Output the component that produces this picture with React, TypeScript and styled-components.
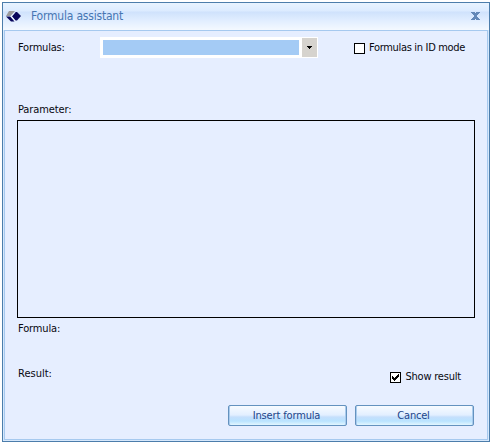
import React from "react";
import styled, { createGlobalStyle } from "styled-components";

const GlobalStyle = createGlobalStyle`
  * { box-sizing: border-box; }
  body {
    margin: 0;
    background: #fff;
    color: #080810;
    font: 11px/14px "DejaVu Sans Condensed", "DejaVu Sans", sans-serif;
    font-stretch: condensed;
  }
  button { font: inherit; font-stretch: inherit; }
`;

const Page = styled.div`
  height: 444px;
  padding: 2px;
  overflow: hidden;
`;

const Dialog = styled.section`
  display: flex;
  flex-direction: column;
  width: 488px;
  height: 440px;
  padding: 0 1px 1px;
  border: 1px solid #4c7dab;
  background: #d6e8fc;
`;

const TitleBar = styled.header`
  display: flex;
  align-items: center;
  flex: none;
  height: 27px;
  margin: 0 -1px;
  padding: 0 9px 1px 3px;
  background: linear-gradient(#e8f3ff 0, #dcebff 8px, #cfe2fc 9px, #e0edff 17px, #f4f9ff 27px);
`;

const Title = styled.h1`
  flex: 1;
  margin: 0 0 0 10px;
  color: #4676b3;
  font-size: 12px;
  font-weight: normal;
  line-height: 16px;
  letter-spacing: -0.2px;
`;

const CloseButton = styled.button`
  display: flex;
  width: 9px;
  height: 8px;
  padding: 0;
  border: 0;
  background: none;
`;

const Content = styled.main`
  flex: 1;
  display: flex;
  flex-direction: column;
  padding: 6px 12px 12px;
  border: 1px solid #a6c9ef;
  background: #e6eeff;
`;

const FormulaRow = styled.div`
  display: flex;
  align-items: center;
  height: 22px;
`;

const Label = styled.span<{ $spacing?: number }>`
  padding-left: 1px;
  white-space: nowrap;
  letter-spacing: ${({ $spacing = 0 }) => $spacing}px;
`;

const FormulaLabel = styled(Label)`
  width: 83px;
`;

const ComboBox = styled.div`
  display: flex;
  align-self: flex-start;
  width: 218px;
  height: 21px;
  padding: 1px;
  background: #fff;
`;

const Selection = styled.div`
  width: 196px;
  height: 15px;
  margin: 2px 3px 2px 2px;
  background: #a4cbf5;
`;

const DropButton = styled.button`
  display: flex;
  align-items: center;
  justify-content: center;
  width: 15px;
  height: 19px;
  padding: 0;
  border: 0;
  background: #d6d3ce;
`;

const CheckField = styled.label<{ $gap: number }>`
  display: flex;
  align-items: center;
  gap: 3px;
  margin-left: ${({ $gap }) => $gap}px;
`;

const Box = styled.span`
  display: flex;
  width: 11px;
  height: 11px;
  border: 1px solid #000;
  background: #fff;
`;

const ParameterLabel = styled.div`
  height: 16px;
  margin-top: 44px;
`;

const ParameterArea = styled.div`
  height: 198px;
  margin-top: 1px;
  border: 1px solid #000;
`;

const ResultLabel = styled.div`
  margin-top: 4px;
`;

const ResultRow = styled.div`
  display: flex;
  align-items: flex-start;
  justify-content: space-between;
  height: 18px;
  margin-top: 31px;
`;

const ShowResult = styled(CheckField)`
  margin-top: 3px;
  margin-right: 14px;
`;

const Actions = styled.footer`
  display: flex;
  justify-content: flex-end;
  gap: 8px;
  margin-top: 20px;
  margin-right: 1px;
`;

const ActionButton = styled.button<{ $spacing?: number }>`
  width: 119px;
  height: 21px;
  padding: 0 2px 0 0;
  border: 1px solid #6492bf;
  border-radius: 2px;
  color: #20458b;
  line-height: 19px;
  letter-spacing: ${({ $spacing = 0 }) => $spacing}px;
  background: linear-gradient(#f8fbff 0, #e2efff 9px, #c5dffc 11px, #b9e3ff 15px, #e2f6ff 100%);
  box-shadow: inset 1px 0 #a9cbed, inset -1px 0 #a9cbed;
`;

function Logo() {
  return (
    <svg width="15" height="11" viewBox="0 0 15 11">
      <path d="M3 0H9L4.5 5H0Z" fill="#9b9a9c" />
      <path d="M0 5.5H4.2L8.5 10.5H5Z" fill="#09065c" />
      <path d="M9.5 1H11L15 5L11 9.5H9.5L6 5.3Z" fill="#09065c" />
      <path d="M9 1.3L5.3 5.3L9 10" fill="none" stroke="#f4f8ff" strokeWidth="0.9" />
    </svg>
  );
}

export default function App() {
  return (
    <Page>
      <GlobalStyle />
      <Dialog>
        <TitleBar>
          <Logo />
          <Title>Formula assistant</Title>
          <CloseButton aria-label="Close">
            <svg width="9" height="8" viewBox="0 0 9 8" shapeRendering="crispEdges">
              <path d="M0 0H4V1H5V0H9V1H8V2H7V3H6V5H7V6H8V7H9V8H5V7H4V8H0V7H1V6H2V5H3V3H2V2H1V1H0Z" fill="#6488b7" />
            </svg>
          </CloseButton>
        </TitleBar>
        <Content>
          <FormulaRow>
            <FormulaLabel $spacing={-0.2}>Formulas:</FormulaLabel>
            <ComboBox>
              <Selection />
              <DropButton aria-label="Select formula">
                <svg width="5" height="3" viewBox="0 0 5 3" shapeRendering="crispEdges">
                  <path d="M0 0H5V1H4V2H3V3H2V2H1V1H0Z" />
                </svg>
              </DropButton>
            </ComboBox>
            <CheckField $gap={36}>
              <Box />
              <Label $spacing={-0.32}>Formulas in ID mode</Label>
            </CheckField>
          </FormulaRow>
          <ParameterLabel><Label $spacing={-0.1}>Parameter:</Label></ParameterLabel>
          <ParameterArea />
          <ResultLabel><Label $spacing={-0.15}>Formula:</Label></ResultLabel>
          <ResultRow>
            <Label>Result:</Label>
            <ShowResult $gap={0}>
              <Box>
                <svg width="9" height="9" viewBox="0 0 9 9" shapeRendering="crispEdges">
                  <path d="M1 3H2V4H3V5H4V4H5V3H6V2H7V1H8V4H7V5H6V6H5V7H4V8H3V7H2V6H1Z" />
                </svg>
              </Box>
              <Label $spacing={-0.2}>Show result</Label>
            </ShowResult>
          </ResultRow>
          <Actions>
            <ActionButton $spacing={-0.15}>Insert formula</ActionButton>
            <ActionButton $spacing={-0.2}>Cancel</ActionButton>
          </Actions>
        </Content>
      </Dialog>
    </Page>
  );
}
